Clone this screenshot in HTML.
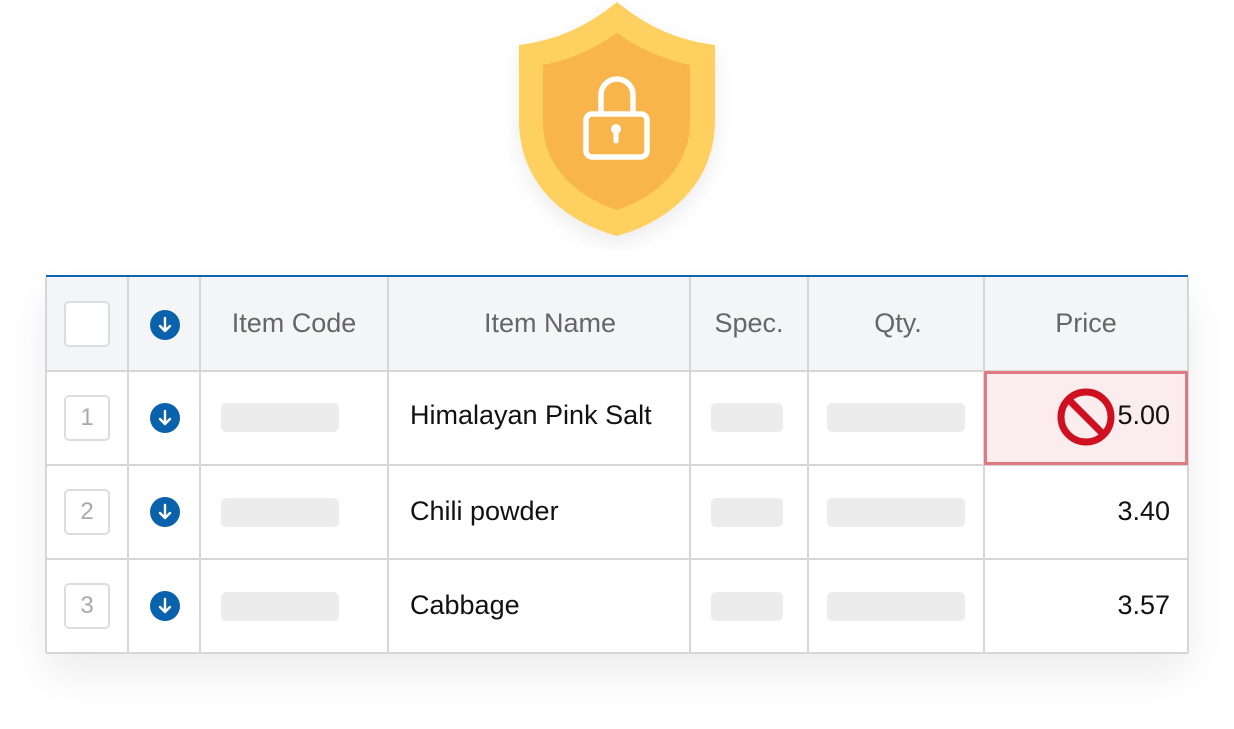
<!DOCTYPE html><html><head><style>
body{margin:0;width:1234px;height:729px;background:#fff;position:relative;overflow:hidden;font-family:"Liberation Sans",sans-serif}
.t{position:absolute;left:46px;top:276px;width:1142px;height:377px;box-shadow:0 20px 40px rgba(0,0,0,.08)}
.a{position:absolute}
.hl{position:absolute;left:46px;width:1142px;height:2px;background:#d6d6d6}
.vl{position:absolute;top:277px;height:376px;width:2px;background:#d6d6d6}
.h{position:absolute;top:277px;height:93px;line-height:93px;font-size:27px;color:#666;text-align:center}
.c{position:absolute;font-size:27px;color:#111}
.bar{position:absolute;height:29px;background:#ececec;border-radius:5px}
.box{position:absolute;left:64px;width:46px;height:46px;border:2px solid #ddd;border-radius:5px;background:#fff;box-sizing:border-box;text-align:center;line-height:42px;font-size:24px;color:#aaa}
.dn{position:absolute;left:150px;width:30px;height:30px}
</style></head><body>
<svg class="a" style="left:500px;top:0" width="240" height="250" viewBox="500 0 240 250">
<defs><filter id="f" x="-30%" y="-30%" width="160%" height="160%"><feDropShadow dx="0" dy="8" stdDeviation="10" flood-color="#000" flood-opacity=".08"/></filter></defs>
<path filter="url(#f)" d="M617 2C590 24 560 40 519 45L519 120C519 180 560 220 617 236C674 220 715 180 715 120L715 45C674 40 644 24 617 2Z" fill="#fed05f"/>
<path d="M617 33C596 48 570 60 543 65L543 122C543 165 575 196 617 210C659 196 690 165 690 122L690 65C664 60 638 48 617 33Z" fill="#f8b54c"/>
<g fill="none" stroke="#fff" stroke-width="5.5"><path d="M601 114V95a16 16 0 0 1 32 0V114"/><rect x="586" y="114" width="61" height="43" rx="6"/></g>
<circle cx="616" cy="129" r="5" fill="#fff"/><path d="M616 130v11" stroke="#fff" stroke-width="5" stroke-linecap="round"/>
</svg>
<div class="t"></div>
<div class="a" style="left:46px;top:277px;width:1142px;height:93px;background:#f4f5f7"></div>
<div class="a" style="left:46px;top:370px;width:1142px;height:283px;background:#fff"></div>
<div class="a" style="left:46px;top:275px;width:1142px;height:2px;background:#1065ad"></div>
<div class="hl" style="top:370px"></div><div class="hl" style="top:464px"></div><div class="hl" style="top:558px"></div><div class="hl" style="top:652px"></div>
<div class="vl" style="left:45px"></div><div class="vl" style="left:127px"></div><div class="vl" style="left:199px"></div><div class="vl" style="left:387px"></div><div class="vl" style="left:689px"></div><div class="vl" style="left:807px"></div><div class="vl" style="left:983px"></div><div class="vl" style="left:1187px"></div>
<div class="box" style="top:301px"></div>
<div class="h" style="left:200px;width:188px">Item Code</div>
<div class="h" style="left:390px;width:320px">Item Name</div>
<div class="h" style="left:690px;width:118px">Spec.</div>
<div class="h" style="left:808px;width:180px">Qty.</div>
<div class="h" style="left:984px;width:204px">Price</div>
<svg width="0" height="0" style="position:absolute"><symbol id="d" viewBox="0 0 30 30"><circle cx="15" cy="15" r="15" fill="#0a62ad"/><path d="M15 8v13M10 16l5 5 5-5" stroke="#fff" stroke-width="2.4" fill="none" stroke-linecap="round" stroke-linejoin="round"/></symbol></svg>
<svg class="dn" style="top:310px"><use href="#d"/></svg>
<svg class="dn" style="top:403px"><use href="#d"/></svg>
<svg class="dn" style="top:497px"><use href="#d"/></svg>
<svg class="dn" style="top:591px"><use href="#d"/></svg>
<div class="box" style="top:395px">1</div><div class="box" style="top:489px">2</div><div class="box" style="top:583px">3</div>
<div class="bar" style="left:221px;top:403px;width:118px"></div><div class="bar" style="left:221px;top:498px;width:118px"></div><div class="bar" style="left:221px;top:592px;width:118px"></div>
<div class="bar" style="left:711px;top:403px;width:72px"></div><div class="bar" style="left:711px;top:498px;width:72px"></div><div class="bar" style="left:711px;top:592px;width:72px"></div>
<div class="bar" style="left:827px;top:403px;width:138px"></div><div class="bar" style="left:827px;top:498px;width:138px"></div><div class="bar" style="left:827px;top:592px;width:138px"></div>
<div class="c" style="left:410px;top:400px">Himalayan Pink Salt</div>
<div class="c" style="left:410px;top:496px">Chili powder</div>
<div class="c" style="left:410px;top:590px">Cabbage</div>
<div class="a" style="left:984px;top:371px;width:204px;height:94px;box-sizing:border-box;border:3px solid #e07a82;background:#fbecee"></div>
<svg class="a" style="left:1056px;top:387px" width="60" height="60" viewBox="0 0 60 60"><circle cx="30" cy="30" r="25" fill="none" stroke="#cf1020" stroke-width="7"/><path d="M13 13L47 47" stroke="#cf1020" stroke-width="7"/></svg>
<div class="c" style="right:64px;top:400px">5.00</div>
<div class="c" style="right:64px;top:496px">3.40</div>
<div class="c" style="right:64px;top:590px">3.57</div>
</body></html>
